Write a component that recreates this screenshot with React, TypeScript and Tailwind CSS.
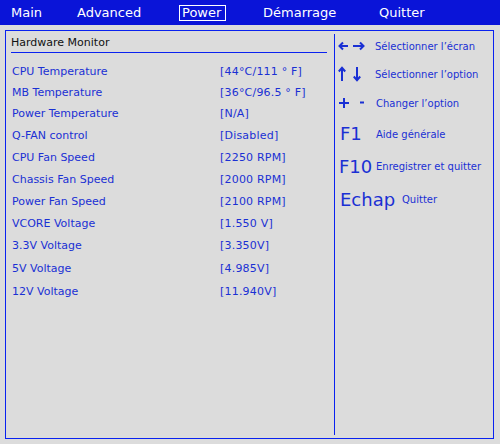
const rows = [
  { label: 'CPU Temperature', value: '[44°C/111 ° F]', h: 'h-[21px]' },
  { label: 'MB Temperature', value: '[36°C/96.5 ° F]', h: 'h-[21px]' },
  { label: 'Power Temperature', value: '[N/A]', h: 'h-[21px]' },
  { label: 'Q-FAN control', value: '[Disabled]', h: 'h-[22px]' },
  { label: 'CPU Fan Speed', value: '[2250 RPM]', h: 'h-[22px]' },
  { label: 'Chassis Fan Speed', value: '[2000 RPM]', h: 'h-[22px]' },
  { label: 'Power Fan Speed', value: '[2100 RPM]', h: 'h-[22px]' },
  { label: 'VCORE Voltage', value: '[1.550 V]', h: 'h-[22px]' },
  { label: '3.3V Voltage', value: '[3.350V]', h: 'h-[23px]' },
  { label: '5V Voltage', value: '[4.985V]', h: 'h-[23px]' },
  { label: '12V Voltage', value: '[11.940V]', h: 'h-[23px]' },
];

function ArrowsLR() {
  return (
    <svg width="28" height="12" viewBox="0 0 28 12" className="text-[#1a30d4]">
      <g fill="none" stroke="currentColor" strokeWidth="2">
        <path d="M2 6h8M5 2.5 1.5 6 5 9.5" />
        <path d="M15 6h10M22 2.5 25.5 6 22 9.5" />
      </g>
    </svg>
  );
}

function ArrowsUD() {
  return (
    <svg width="28" height="16" viewBox="0 0 28 16" className="text-[#1a30d4]">
      <g fill="none" stroke="currentColor" strokeWidth="2">
        <path d="M4 2v13M0.8 5.5 4 1.8 7.2 5.5" />
        <path d="M19 1v13M15.8 10.5 19 14.2 22.2 10.5" />
      </g>
    </svg>
  );
}

function PlusMinus() {
  return (
    <svg width="28" height="12" viewBox="0 0 28 12" className="text-[#1a30d4]">
      <g fill="none" stroke="currentColor" strokeWidth="2">
        <path d="M1 6h10M6 1v10" />
        <path d="M22 5.5h4" />
      </g>
    </svg>
  );
}

export default function App() {
  return (
    <div className="w-[500px] h-[444px] bg-[#dcdcdc] font-['DejaVu_Sans',Verdana,sans-serif] overflow-hidden">
      {/* Top menu */}
      <div className="h-[25px] bg-[#0a14d8] flex items-center pl-[11px] text-[13px] text-white">
        <span className="w-[66px]">Main</span>
        <span className="w-[102px]">Advanced</span>
        <span className="w-[47px] h-[16px] border border-white flex items-center pl-[2px] leading-none mr-[37px]">Power</span>
        <span className="w-[116px]">Démarrage</span>
        <span>Quitter</span>
      </div>

      {/* Main panel */}
      <div className="ml-[5px] mt-[5px] w-[489px] h-[409px] border border-[#0a22f0] flex">
        {/* Left column */}
        <div className="w-[328px] pl-[5px] pr-[7px] pt-[3px]">
          <div className="h-[18px] flex items-center text-[11px] text-[#111]">Hardware Monitor</div>
          <div className="border-b border-[#0a22f0]" />
          <div className="pt-[9px]">
            {rows.map((r) => (
              <div key={r.label} className={`${r.h} flex items-center text-[11px] text-[#1a30d4]`}>
                <span className="w-[209px] pl-[1px]">{r.label}</span>
                <span className="tracking-[0.2px]">{r.value}</span>
              </div>
            ))}
          </div>
        </div>

        {/* Right column */}
        <div className="flex-1 my-[3px] border-l border-[#0a22f0] pl-[3px] pt-[1px] text-[#1a30d4]">
          <div className="h-[22px] flex items-center">
            <span className="w-[37px]"><ArrowsLR /></span>
            <span className="text-[10px]">Sélectionner l’écran</span>
          </div>
          <div className="h-[32px] flex items-center pt-[2px]">
            <span className="w-[37px]"><ArrowsUD /></span>
            <span className="text-[10px]">Sélectionner l’option</span>
          </div>
          <div className="h-[28px] flex items-center">
            <span className="w-[38px]"><PlusMinus /></span>
            <span className="text-[10px]">Changer l’option</span>
          </div>
          <div className="h-[34px] flex items-center">
            <span className="w-[38px] pl-[2px] text-[18px] leading-none">F1</span>
            <span className="text-[10px]">Aide générale</span>
          </div>
          <div className="h-[31px] flex items-center">
            <span className="w-[38px] pl-[1px] text-[18px] leading-none">F10</span>
            <span className="text-[10px]">Enregistrer et quitter</span>
          </div>
          <div className="h-[35px] flex items-center">
            <span className="w-[64px] pl-[2px] text-[18px] leading-none">Echap</span>
            <span className="text-[10px]">Quitter</span>
          </div>
        </div>
      </div>
    </div>
  );
}
